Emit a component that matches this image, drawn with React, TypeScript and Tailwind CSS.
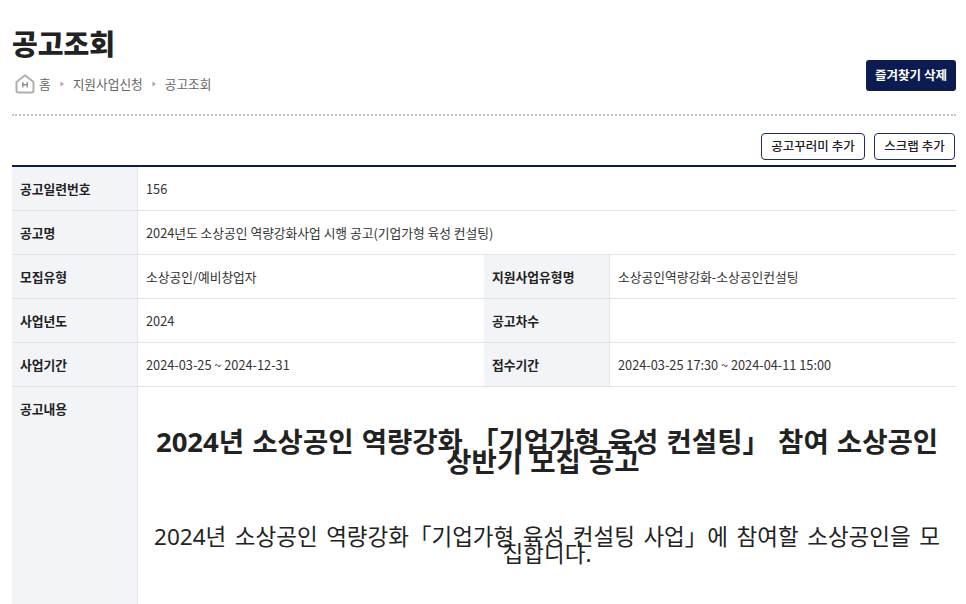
const F = "font-['Noto_Sans_CJK_KR','Noto_Sans',sans-serif]";

function Row({ cells }: { cells: [string, string][] }) {
  return (
    <div className="flex h-[44px] border-b border-[#e3e3e3]">
      {cells.map(([k, v], i) => (
        <div key={k} className={cells.length === 2 && i === 0 ? "flex w-[472px] shrink-0" : "flex flex-1"}>
          <div className="flex w-[126px] shrink-0 items-center border-r border-[#e3e3e3] bg-[#f2f4f8] pl-[8px] text-[12.8px] font-bold text-[#222]">
            {k}
          </div>
          <div className="flex flex-1 items-center pl-[8px] text-[12.75px] text-[#333]">{v}</div>
        </div>
      ))}
    </div>
  );
}

function Crumb() {
  return (
    <svg width="8" height="8" viewBox="0 0 8 8" className="shrink-0">
      <path d="M2.5 1.5 L6 4 L2.5 6.5 Z" fill="#a8a8a8" />
    </svg>
  );
}

export default function App() {
  return (
    <div className={`${F} h-[604px] w-[966px] overflow-hidden bg-white pr-[10px] pl-[12px]`}>
      <div className="flex h-[116px] items-start justify-between border-b-2 border-dotted border-[#c4c4c4]">
        <div>
          <h1 className="mt-[26px] text-[28px] leading-[34px] font-black text-[#222]">공고조회</h1>
          <div className="mt-[14px] flex items-center pl-[3px] text-[12.7px] leading-[20px] text-[#666]">
            <svg width="20" height="20" viewBox="0 0 20 20" className="shrink-0">
              <path d="M1.5 8 L10 1.2 L18.5 8 V16.5 a2 2 0 0 1 -2 2 H3.5 a2 2 0 0 1 -2 -2 Z" fill="none" stroke="#b0b0b0" strokeWidth="2" strokeLinejoin="round" />
              <path d="M7.8 8 V13.5 M12.2 8 V13.5 M7.8 10.7 H12.2" fill="none" stroke="#8f8f8f" strokeWidth="1.4" />
            </svg>
            <span className="ml-[4px]">홈</span>
            <span className="mx-[7px]"><Crumb /></span>
            <span>지원사업신청</span>
            <span className="mx-[7px]"><Crumb /></span>
            <span>공고조회</span>
          </div>
        </div>
        <button className="mt-[60px] flex h-[31px] w-[90px] items-center justify-center rounded-[3px] bg-[#0c1c50] text-[12.5px] font-bold text-white">
          즐겨찾기 삭제
        </button>
      </div>
      <div className="flex h-[49px] items-start justify-end gap-[9px] pt-[17px] pr-[1px]">
        <button className="flex h-[27px] w-[104px] items-center justify-center rounded-[4px] border border-[#1c2c5e] bg-white text-[12.5px] font-medium text-[#222]">
          공고꾸러미 추가
        </button>
        <button className="flex h-[27px] w-[81px] items-center justify-center rounded-[4px] border border-[#1c2c5e] bg-white text-[12.5px] font-medium text-[#222]">
          스크랩 추가
        </button>
      </div>
      <div className="border-t-2 border-[#0c1c50]">
        <Row cells={[["공고일련번호", "156"]]} />
        <Row cells={[["공고명", "2024년도 소상공인 역량강화사업 시행 공고(기업가형 육성 컨설팅)"]]} />
        <Row cells={[["모집유형", "소상공인/예비창업자"], ["지원사업유형명", "소상공인역량강화-소상공인컨설팅"]]} />
        <Row cells={[["사업년도", "2024"], ["공고차수", ""]]} />
        <Row cells={[["사업기간", "2024-03-25 ~ 2024-12-31"], ["접수기간", "2024-03-25 17:30 ~ 2024-04-11 15:00"]]} />
        <div className="flex h-[300px]">
          <div className="w-[126px] shrink-0 border-r border-[#e3e3e3] bg-[#f2f4f8] pt-[13px] pl-[8px] text-[12.8px] leading-[18px] font-bold text-[#222]">
            공고내용
          </div>
          <div className="flex-1 px-[14px] text-center text-[#222] font-['Noto_Sans','Noto_Sans_CJK_KR',sans-serif]">
            <h2 className="mt-[45px] text-[27.5px] leading-[20px] font-bold [word-spacing:1px]">
              2024년 소상공인 역량강화 「기업가형 육성 컨설팅」 참여 소상공인 상반기 모집 공고{"\u00a0"}
            </h2>
            <p className="mt-[56px] text-[22.5px] leading-[17px] [word-spacing:2.7px]">
              2024년 소상공인 역량강화「기업가형 육성 컨설팅 사업」에 참여할 소상공인을 모집합니다.
            </p>
          </div>
        </div>
      </div>
    </div>
  );
}
